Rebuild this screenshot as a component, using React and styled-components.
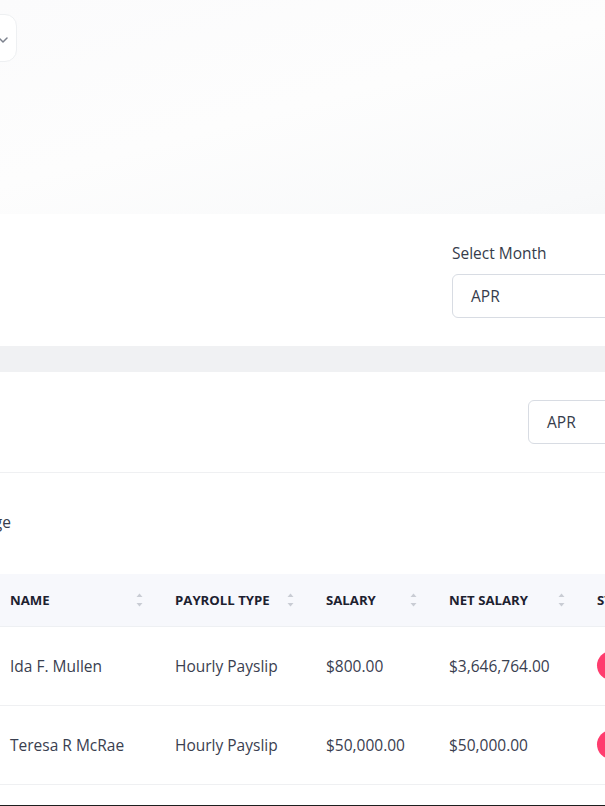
import React from 'react'
import styled, { createGlobalStyle } from 'styled-components';

const GlobalStyle = createGlobalStyle`
  html, body {
    margin: 0;
    padding: 0;
    overflow: hidden;
    background: #f0f1f3;
    font-family: "Open Sans", "Noto Sans", sans-serif;
  }
  * { box-sizing: border-box; }
`;

const rows = [
    { name: 'Ida F. Mullen', type: 'Hourly Payslip', salary: '$800.00', net: '$3,646,764.00', status: 'Unpaid' },
    { name: 'Teresa R McRae', type: 'Hourly Payslip', salary: '$50,000.00', net: '$50,000.00', status: 'Unpaid' },
];

const columns = [
    { label: 'Name', width: 165 },
    { label: 'Payroll Type', width: 151 },
    { label: 'Salary', width: 123 },
    { label: 'Net Salary', width: 148 },
    { label: 'Status', width: 155, noSort: true },
];

function SortIcon() {
    return (
        <svg width="7" height="14" viewBox="0 0 7 14">
            <path d="M3.5 0.5 L6.5 4 L0.5 4 Z" fill="#c9ccd4" />
            <path d="M3.5 13.5 L6.5 10 L0.5 10 Z" fill="#c9ccd4" />
        </svg>
    );
}

function ChevronDown() {
    return (
        <svg width="10" height="6" viewBox="0 0 10 6" fill="none">
            <path d="M1 1 L5 5 L9 1" stroke="#7d828e" strokeWidth="1.5" strokeLinecap="round" strokeLinejoin="round" />
        </svg>
    );
}

function App() {
  return (
    <Page>
        <GlobalStyle />
        <Hero>
            <MenuButton><ChevronDown /></MenuButton>
        </Hero>
        <FilterCard>
            <Field>
                <Label>Select Month</Label>
                <SelectBox>APR</SelectBox>
            </Field>
        </FilterCard>
        <ReportCard>
            <CardHeader>
                <SelectBox $width={184}>APR</SelectBox>
            </CardHeader>
            <CardBody>
                <PageInfo><span>Payslips for this page</span></PageInfo>
                <Table>
                    <colgroup>
                        {columns.map((c) => <col key={c.label} style={{ width: c.width }} />)}
                    </colgroup>
                    <thead>
                        <tr>
                            {columns.map((c) => (
                                <Th key={c.label}>
                                    <HeadInner>
                                        <span>{c.label}</span>
                                        {!c.noSort && <SortIcon />}
                                    </HeadInner>
                                </Th>
                            ))}
                        </tr>
                    </thead>
                    <tbody>
                        {rows.map((r) => (
                            <tr key={r.name}>
                                <Td>{r.name}</Td>
                                <Td>{r.type}</Td>
                                <Td>{r.salary}</Td>
                                <Td>{r.net}</Td>
                                <Td><Badge>{r.status}</Badge></Td>
                            </tr>
                        ))}
                    </tbody>
                </Table>
            </CardBody>
        </ReportCard>
    </Page>
  )
}

const Page = styled.div`
    width: 736px;
    min-height: 806px;
`;

const Hero = styled.div`
    height: 214px;
    padding-top: 14px;
    background: linear-gradient(165deg, #fbfbfc 0%, #fdfdfd 45%, #f8f9fa 85%, #f5f6f7 100%);
`;

const MenuButton = styled.div`
    width: 60px;
    height: 48px;
    margin-left: -43px;
    display: flex;
    align-items: center;
    justify-content: flex-end;
    padding-right: 8px;
    padding-top: 3px;
    background: #fff;
    border: 1px solid #eef0f2;
    border-radius: 12px;
`;

const FilterCard = styled.div`
    background: #fff;
    height: 132px;
    padding: 29px 24px 0;
    display: flex;
    justify-content: flex-end;
`;

const Field = styled.div`
    width: 260px;
    display: flex;
    flex-direction: column;
    gap: 10px;
`;

const Label = styled.label`
    font-size: 15.5px;
    line-height: 21px;
    color: #363c4b;
`;

const SelectBox = styled.div`
    width: ${(p) => (p.$width ? `${p.$width}px` : '100%')};
    height: 44px;
    border: 1px solid #d8dce3;
    border-radius: 6px;
    background: #fff;
    display: flex;
    align-items: center;
    padding-left: 18px;
    font-size: 15.5px;
    color: #363c4b;
`;

const ReportCard = styled.div`
    margin-top: 26px;
    background: #fff;
    border-bottom: 2px solid #1e1e1e;
`;

const CardHeader = styled.div`
    height: 101px;
    padding: 28px 24px 0;
    display: flex;
    justify-content: flex-end;
    border-bottom: 1px solid #eff0f2;
`;

const CardBody = styled.div`
    padding: 38px 0 20px;
`;

const PageInfo = styled.div`
    width: 11px;
    height: 22px;
    display: flex;
    justify-content: flex-end;
    white-space: nowrap;
    font-size: 15.5px;
    line-height: 22px;
    color: #363c4b;
    margin-bottom: 41px;
`;

const Table = styled.table`
    width: 742px;
    margin-left: -6px;
    table-layout: fixed;
    border-collapse: collapse;
`;

const Th = styled.th`
    height: 52px;
    padding: 0 16px;
    background: #f7f8fc;
    border-bottom: 1px solid #eef0f3;
    text-align: left;
    font-size: 13.2px;
    font-weight: 700;
    text-transform: uppercase;
    color: #1d2130;
    white-space: nowrap;
    overflow: hidden;
`;

const HeadInner = styled.div`
    display: flex;
    align-items: center;
    justify-content: space-between;
    gap: 8px;
`;

const Td = styled.td`
    height: 79px;
    padding: 0 16px;
    border-bottom: 1px solid #eff0f2;
    font-size: 15.5px;
    color: #3a4050;
    white-space: nowrap;
    overflow: hidden;
`;

const Badge = styled.span`
    display: inline-flex;
    align-items: center;
    height: 29px;
    padding: 0 14px;
    border-radius: 15px;
    background: #ff3d6e;
    color: #fff;
    font-size: 13px;
    font-weight: 600;
`;

export default App
